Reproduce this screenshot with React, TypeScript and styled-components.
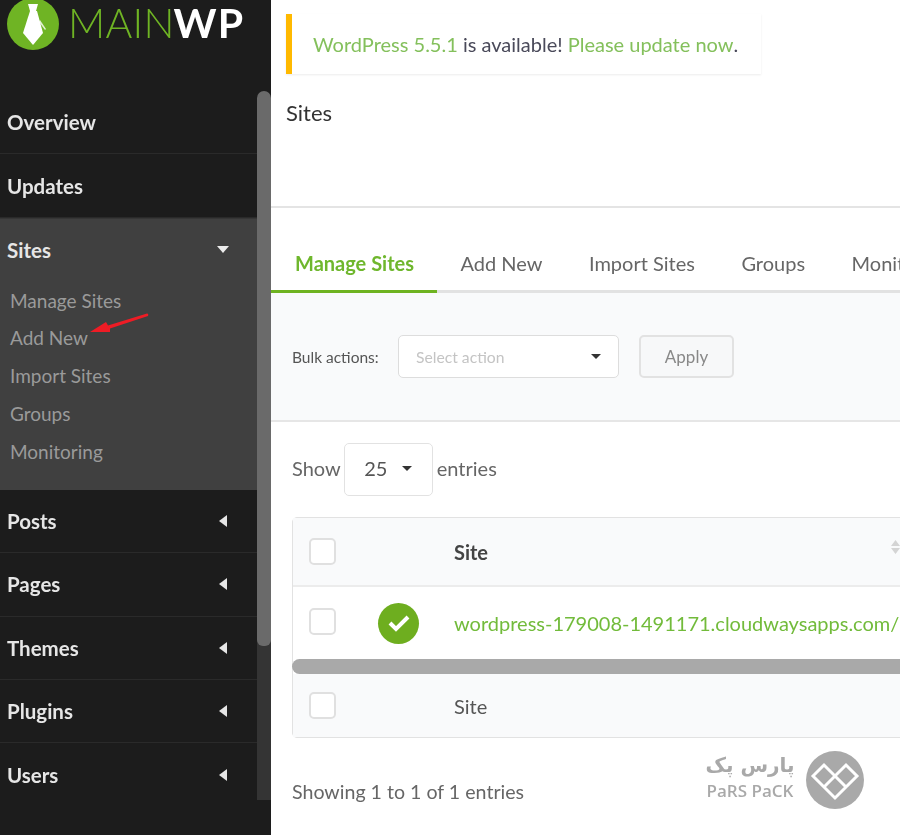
import React from "react";
import styled, { createGlobalStyle } from "styled-components";

const GlobalStyle = createGlobalStyle`
  html, body {
    margin: 0;
    padding: 0;
    background: #ffffff;
    font-family: Lato, "Liberation Sans", sans-serif;
  }
  * { box-sizing: border-box; }
`;

const Page = styled.div`
  display: flex;
  width: 900px;
  height: 835px;
  overflow: hidden;
  position: relative;
  filter: blur(0.5px);
`;

const Sidebar = styled.aside`
  display: flex;
  flex: 0 0 271px;
  height: 835px;
  background: #1c1c1c;
`;

const SideColumn = styled.div`
  flex: 0 0 257px;
  display: flex;
  flex-direction: column;
`;

const LogoRow = styled.div`
  height: 91px;
  display: flex;
  align-items: flex-start;
  padding-left: 7px;
`;

const LogoText = styled.div`
  margin-left: 9px;
  font-size: 41px;
  line-height: 46px;
  font-weight: 300;
  color: #6fb424;
  letter-spacing: 0.2px;
  white-space: nowrap;

  span {
    margin-left: -1px;
    color: #ffffff;
    font-weight: 700;
    letter-spacing: 1.2px;
  }
`;

const Nav = styled.nav`
  display: flex;
  flex-direction: column;
`;

const NavItem = styled.div<{ $open?: boolean }>`
  height: ${(p) => (p.$open ? "62.4px" : "63.4px")};
  display: flex;
  align-items: center;
  justify-content: space-between;
  padding: 0 30px 0 7px;
  font-size: 20.5px;
  font-weight: 700;
  color: #e6e6e6;
  border-bottom: ${(p) => (p.$open ? "0" : "1px solid #2a2a2a")};

  &:last-child {
    border-bottom: 0;
  }
`;

const OpenGroup = styled.div`
  position: relative;
  height: 272px;
  background: #404040;
  border-top: 1px solid #363636;
`;

const SubMenu = styled.div`
  display: flex;
  flex-direction: column;
  padding: 0 0 0 10px;
`;

const SubItem = styled.div`
  height: 37.8px;
  display: flex;
  align-items: center;
  font-size: 19px;
  color: #9a9a9a;
`;

const CaretDown = styled.i`
  width: 0;
  height: 0;
  margin-right: -2px;
  border-left: 6.5px solid transparent;
  border-right: 6.5px solid transparent;
  border-top: 7px solid #ececec;
`;

const CaretLeft = styled.i`
  width: 0;
  height: 0;
  border-top: 6px solid transparent;
  border-bottom: 6px solid transparent;
  border-right: 8px solid #e6e6e6;
`;

const RedArrow = styled.svg`
  position: absolute;
  left: 88px;
  top: 94px;
`;

const ScrollColumn = styled.div`
  flex: 0 0 14px;
  display: flex;
  flex-direction: column;
  padding-top: 91px;
`;

const ScrollThumb = styled.div`
  position: relative;
  z-index: 1;
  height: 555px;
  background: #6a6a6a;
  border-radius: 7px 7px 6px 6px;
`;

const ScrollTrack = styled.div`
  height: 162px;
  margin-top: -8px;
  background: #343434;
`;

const Main = styled.main`
  flex: 1;
  min-width: 0;
  display: flex;
  flex-direction: column;
  overflow: hidden;
`;

const Notice = styled.div`
  width: 475px;
  height: 60px;
  margin: 14px 0 0 15px;
  padding-left: 21px;
  display: flex;
  align-items: center;
  border-left: 6px solid #ffb900;
  box-shadow: 0 1px 2px rgba(0, 0, 0, 0.08);
  font-size: 20px;
  color: #4a4a5a;
  white-space: pre;
`;

const GreenLink = styled.a`
  color: #84c05c;
`;

const Title = styled.h1`
  margin: 0;
  padding: 26px 0 0 15px;
  height: 134px;
  font-size: 22px;
  line-height: 26px;
  font-weight: 400;
  color: #333333;
  border-bottom: 2px solid #e4e4e4;
`;

const Tabs = styled.div`
  height: 85px;
  display: flex;
  border-bottom: 3px solid #e2e2e2;
`;

const Tab = styled.div<{ $active?: boolean }>`
  display: flex;
  align-items: center;
  height: 85px;
  padding: 27px 23px 0 ${(p) => (p.$active ? "24px" : "23.5px")};
  font-size: 20px;
  white-space: nowrap;
  font-weight: ${(p) => (p.$active ? 700 : 400)};
  color: ${(p) => (p.$active ? "#6fb72d" : "#666666")};
  border-bottom: 3px solid ${(p) => (p.$active ? "#6eb320" : "transparent")};
`;

const BulkBar = styled.div`
  height: 129px;
  display: flex;
  align-items: center;
  padding: 0 0 0 21px;
  background: #f9fafb;
  border-bottom: 2px solid #e6e6e6;
`;

const BulkLabel = styled.label`
  width: 106px;
  font-size: 15.5px;
  color: #555555;
`;

const BulkSelect = styled.div`
  width: 221px;
  height: 43px;
  display: flex;
  align-items: center;
  justify-content: space-between;
  padding: 0 17px;
  background: #ffffff;
  border: 1px solid #dddddd;
  border-radius: 5px;
  font-size: 15.7px;
  color: #c4c4c4;
`;

const SmallCaret = styled.i`
  width: 0;
  height: 0;
  border-left: 5px solid transparent;
  border-right: 5px solid transparent;
  border-top: 5px solid #333333;
`;

const ApplyButton = styled.button`
  width: 95px;
  height: 43px;
  margin-left: 20px;
  background: #f7f8f9;
  border: 2px solid #e2e2e2;
  border-radius: 5px;
  font-family: inherit;
  font-size: 17px;
  color: #888888;
`;

const ShowRow = styled.div`
  display: flex;
  align-items: flex-start;
  height: 53px;
  margin: 21px 0 21px 21px;
  font-size: 20px;
  line-height: 50px;
  color: #666666;
`;

const ShowSelect = styled.div`
  width: 89px;
  height: 53px;
  margin: 0 4px 0 3px;
  padding-bottom: 3px;
  display: flex;
  align-items: center;
  justify-content: center;
  gap: 15px;
  border: 1px solid #e2e2e2;
  border-radius: 5px;
  color: #555555;
`;

const Table = styled.div`
  width: 700px;
  margin-left: 21px;
  border: 1px solid #e2e2e2;
  border-radius: 5px 0 0 5px;
`;

const Row = styled.div<{ $tone?: string; $height: number }>`
  display: grid;
  grid-template-columns: 69px 76px 446px;
  align-items: center;
  height: ${(p) => p.$height}px;
  padding-left: 16px;
  background: ${(p) => p.$tone || "#ffffff"};
`;

const HeadRow = styled(Row)`
  border-bottom: 2px solid #ececec;
`;

const Check = styled.div<{ $lift?: number }>`
  width: 27px;
  height: 27px;
  margin-bottom: ${(p) => p.$lift || 0}px;
  background: #ffffff;
  border: 2px solid #e0e0e0;
  border-radius: 5px;
`;

const StatusDot = styled.div`
  width: 41px;
  height: 41px;
  display: flex;
  align-items: center;
  justify-content: center;
  border-radius: 50%;
  background: #6eae1f;
`;

const HeadCell = styled.div`
  display: flex;
  align-items: center;
  justify-content: space-between;
  font-size: 20px;
  font-weight: 700;
  color: #444444;
`;

const SortIcon = styled.svg`
  margin-top: -10px;
`;

const SiteLink = styled.a`
  margin-bottom: 1px;
  font-size: 20px;
  color: #72bb3b;
  white-space: nowrap;
`;

const FootCell = styled.div`
  font-size: 20px;
  color: #555555;
`;

const TableScrollbar = styled.div`
  height: 15px;
  margin-left: -1px;
  background: #a9a9a9;
  border-radius: 8px 0 0 8px;
`;

const Showing = styled.div`
  margin: 42px 0 0 21px;
  font-size: 19.6px;
  color: #666666;
`;

const Watermark = styled.div`
  position: absolute;
  left: 706px;
  top: 751px;
  display: flex;
  align-items: flex-start;
  gap: 12px;
  color: #a9a9a9;
`;

const WatermarkText = styled.div`
  display: flex;
  flex-direction: column;
  align-items: center;
  width: 88px;
`;

const WatermarkFarsi = styled.div`
  font-family: "DejaVu Sans", sans-serif;
  font-size: 20px;
  line-height: 28px;
  font-weight: 700;
  direction: rtl;
  white-space: nowrap;
`;

const WatermarkLatin = styled.div`
  margin-top: 2px;
  font-family: "Open Sans", sans-serif;
  font-size: 17px;
  line-height: 20px;
  font-weight: 600;
  white-space: nowrap;
`;

const TieLogo = () => (
  <svg width="52" height="50" viewBox="0 0 52 50">
    <circle cx="26" cy="24" r="26" fill="#6fb424" />
    <path d="M21 4h10l-2 7h-6z" fill="#fff" />
    <path d="M23 11h7l6 22-10 12-10-12z" fill="#fff" />
    <path d="M33 20l6 9-1 1-6-8z" fill="#fff" opacity="0.8" />
  </svg>
);

const HeartMark = () => (
  <svg width="58" height="58" viewBox="0 0 58 58">
    <circle cx="29" cy="29" r="29" fill="#a9a9a9" />
    <path
      d="M7 25L18 14 29 25 40 14 51 25 29 47zM29 25L18 36M29 25L40 36"
      fill="none"
      stroke="#fff"
      strokeWidth="3"
    />
  </svg>
);

const menuAfter = ["Posts", "Pages", "Themes", "Plugins", "Users"];
const subItems = ["Manage Sites", "Add New", "Import Sites", "Groups", "Monitoring"];
const tabs = ["Manage Sites", "Add New", "Import Sites", "Groups", "Monitoring"];

export default function App() {
  return (
    <>
      <GlobalStyle />
      <Page>
        <Sidebar>
          <SideColumn>
            <LogoRow>
              <TieLogo />
              <LogoText>
                MAIN<span>WP</span>
              </LogoText>
            </LogoRow>
            <Nav>
              <NavItem>Overview</NavItem>
              <NavItem>Updates</NavItem>
              <OpenGroup>
                <NavItem $open>
                  Sites
                  <CaretDown />
                </NavItem>
                <SubMenu>
                  {subItems.map((s) => (
                    <SubItem key={s}>{s}</SubItem>
                  ))}
                </SubMenu>
                <RedArrow width="64" height="24" viewBox="0 0 64 24">
                  <path d="M2 19L18 9 20 12.5 59 .5Q61 1 60 3L22 15.5 22 19z" fill="#ee1c25" />
                </RedArrow>
              </OpenGroup>
              {menuAfter.map((m) => (
                <NavItem key={m}>
                  {m}
                  <CaretLeft />
                </NavItem>
              ))}
            </Nav>
          </SideColumn>
          <ScrollColumn>
            <ScrollThumb />
            <ScrollTrack />
          </ScrollColumn>
        </Sidebar>
        <Main>
          <Notice>
            <GreenLink>WordPress 5.5.1</GreenLink> is available! <GreenLink>Please update now</GreenLink>.
          </Notice>
          <Title>Sites</Title>
          <Tabs>
            {tabs.map((t, i) => (
              <Tab key={t} $active={i === 0}>
                {t}
              </Tab>
            ))}
          </Tabs>
          <BulkBar>
            <BulkLabel>Bulk actions:</BulkLabel>
            <BulkSelect>
              Select action
              <SmallCaret />
            </BulkSelect>
            <ApplyButton>Apply</ApplyButton>
          </BulkBar>
          <ShowRow>
            Show
            <ShowSelect>
              25
              <SmallCaret />
            </ShowSelect>
            entries
          </ShowRow>
          <Table>
            <HeadRow $tone="#f9fafb" $height={69}>
              <Check />
              <span />
              <HeadCell>
                Site
                <SortIcon width="9" height="14" viewBox="0 0 9 14">
                  <path d="M4.5 0L9 6H0zM4.5 14L0 8h9z" fill="#d4d4d4" />
                </SortIcon>
              </HeadCell>
            </HeadRow>
            <Row $height={72}>
              <Check $lift={3} />
              <StatusDot>
                <svg width="24" height="20" viewBox="0 0 24 20">
                  <path d="M3 10l6 6L21 4" fill="none" stroke="#fff" strokeWidth="4" />
                </svg>
              </StatusDot>
              <SiteLink>wordpress-179008-1491171.cloudwaysapps.com/</SiteLink>
            </Row>
            <TableScrollbar />
            <Row $tone="#f9fafb" $height={63}>
              <Check />
              <span />
              <FootCell>Site</FootCell>
            </Row>
          </Table>
          <Showing>Showing 1 to 1 of 1 entries</Showing>
        </Main>
        <Watermark>
          <WatermarkText>
            <WatermarkFarsi>پارس پک</WatermarkFarsi>
            <WatermarkLatin>PaRS PaCK</WatermarkLatin>
          </WatermarkText>
          <HeartMark />
        </Watermark>
      </Page>
    </>
  );
}
